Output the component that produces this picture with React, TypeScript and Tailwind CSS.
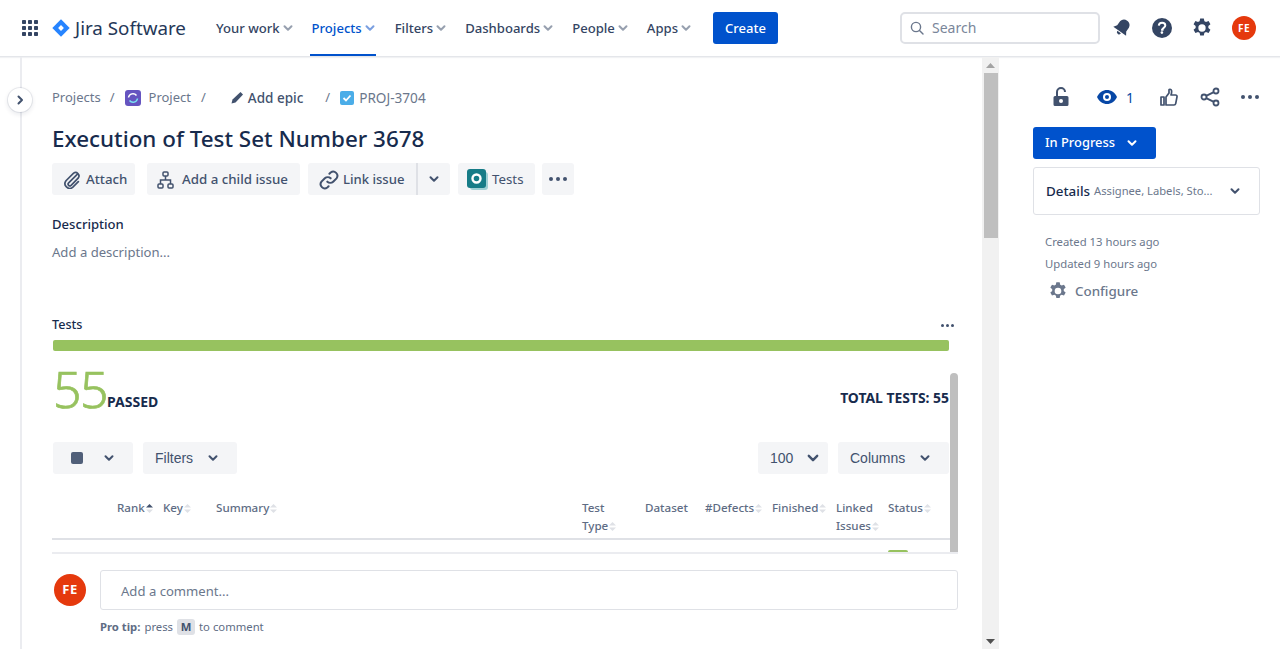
import React from "react";

const Chev = ({ c = "#42526e", w = 10, sw = 2 }: { c?: string; w?: number; sw?: number }) => (
  <svg width={w} height={w} viewBox="0 0 10 10" fill="none" className="shrink-0">
    <path d="M1.5 3.2 5 6.8 8.5 3.2" stroke={c} strokeWidth={sw} strokeLinecap="round" strokeLinejoin="round" />
  </svg>
);

const Sort = ({ up = false }: { up?: boolean }) => (
  <svg width="7" height="9" viewBox="0 0 7 9" className="ml-[1px] inline-block shrink-0">
    <path d="M3.5 0 7 3.6H0Z" fill={up ? "#42526e" : "#dfe1e6"} />
    <path d="M3.5 9 7 5.4H0Z" fill="#dfe1e6" />
  </svg>
);

const Gear = ({ size = 20, c = "#344563" }: { size?: number; c?: string }) => (
  <svg width={size} height={size} viewBox="0 0 24 24" fill="none">
    <path
      fillRule="evenodd"
      clipRule="evenodd"
      fill={c}
      d="M10 1.5h4l.6 3c.6.2 1.2.5 1.7.9l2.900-1 2 3.500-2.300 2c.1.600.1 1.300 0 2l2.300 2-2 3.500-2.900-1c-.5.400-1.100.700-1.700.900l-.600 3h-4l-.600-3c-.600-.200-1.200-.500-1.700-.900l-2.900 1-2-3.500 2.300-2c-.100-.700-.100-1.400 0-2l-2.300-2 2-3.500 2.900 1c.5-.400 1.100-.700 1.700-.900ZM12 8a4 4 0 1 0 0 8 4 4 0 0 0 0-8Z"
    />
  </svg>
);

const NavItem = ({ label, active = false, ml }: { label: string; active?: boolean; ml: string }) => (
  <div className={`flex h-full items-center relative ${ml}`}>
    <span className={`pt-[1px] text-[13.1px] font-medium ${active ? "text-[#0052cc]" : "text-[#344563]"}`}>{label}</span>
    <span className="ml-[3px]">
      <Chev c={active ? "#7a9fe0" : "#97a0af"} />
    </span>
    {active && <div className="absolute -left-[2px] right-[-1px] bottom-0 h-[2px] bg-[#0052cc]" />}
  </div>
);

const Btn = ({ children, cls = "" }: { children: React.ReactNode; cls?: string }) => (
  <div className={`flex h-[32px] items-center rounded-[3px] bg-[#f4f5f7] text-[13.3px] font-medium text-[#42526e] ${cls}`}>
    {children}
  </div>
);

const Dots = ({ c = "#42526e", r = 2, gap = 7 }: { c?: string; r?: number; gap?: number }) => (
  <svg width={gap * 2 + r * 2} height={r * 2} viewBox={`0 0 ${gap * 2 + r * 2} ${r * 2}`}>
    <circle cx={r} cy={r} r={r} fill={c} />
    <circle cx={r + gap} cy={r} r={r} fill={c} />
    <circle cx={r + gap * 2} cy={r} r={r} fill={c} />
  </svg>
);

const Head = ({ children, w }: { children: React.ReactNode; w: string }) => (
  <div className={`shrink-0 text-[11.6px] leading-[18px] font-medium text-[#5e6c84] ${w}`}>{children}</div>
);

export default function App() {
  return (
    <div className="flex h-[649px] w-[1280px] flex-col overflow-hidden bg-white font-['Noto_Sans','Open_Sans',sans-serif] text-[#172b4d]">
      {/* Top bar */}
      <header className="flex h-[57px] shrink-0 items-center border-b border-[#e4e6ea] pl-[22px] shadow-[0_1px_1px_rgba(9,30,66,0.06)]">
        <svg width="16" height="16" viewBox="0 0 16 16" fill="#344563">
          {[0, 6, 12].map((y) =>
            [0, 6, 12].map((x) => <rect key={`${x}-${y}`} x={x} y={y} width="4" height="4" rx="0.8" />)
          )}
        </svg>
        <svg width="18" height="18" viewBox="0 0 18 18" className="ml-[14px]">
          <path d="M9 0.3 17.7 9 9 17.7 0.3 9Z" fill="#2684ff" />
          <path d="M9 6.1 11.9 9 9 11.9 6.1 9Z" fill="#fff" />
        </svg>
        <span className="ml-[5px] w-[111px] whitespace-nowrap text-[18.800px] leading-none text-[#253858]">Jira Software</span>
        <div className="flex h-full items-center">
          <NavItem label="Your work" ml="ml-[30px]" />
          <NavItem label="Projects" active ml="ml-[19px]" />
          <NavItem label="Filters" ml="ml-[20px]" />
          <NavItem label="Dashboards" ml="ml-[19px]" />
          <NavItem label="People" ml="ml-[19px]" />
          <NavItem label="Apps" ml="ml-[19px]" />
        </div>
        <div className="ml-[22px] flex h-[32px] w-[65px] items-center justify-center rounded-[3px] bg-[#0052cc] pt-[1px] text-[13px] font-medium text-white">
          Create
        </div>
        <div className="ml-[122px] flex h-[32px] w-[200px] items-center rounded-[5px] border-2 border-[#dfe1e6] pb-[1px] pl-[8px] text-[14px] text-[#7a869a]">
          <svg width="14" height="14" viewBox="0 0 14 14" fill="none" stroke="#6b778c" strokeWidth="1.4">
            <circle cx="6" cy="6" r="4.6" />
            <path d="M9.5 9.5 13 13" strokeLinecap="round" />
          </svg>
          <span className="ml-[8px]">Search</span>
        </div>
        <svg width="20" height="20" viewBox="0 0 20 20" className="ml-[12px]" fill="#344563">
          <g transform="rotate(35 10 10)">
            <path d="M10 1c3.600 0 5.500 2.600 5.500 5.800v3.700l2.300 3.500H2.200l2.300-3.500V6.800C4.500 3.600 6.400 1 10 1Z" />
            <path d="M7.800 15h4.400a2.200 2.200 0 0 1-4.400 0Z" />
          </g>
        </svg>
        <svg width="22" height="22" viewBox="0 0 22 22" className="ml-[19px]">
          <circle cx="11" cy="11" r="10" fill="#344563" />
          <path d="M7.800 8.600c.1-1.800 1.500-2.900 3.300-2.900 1.900 0 3.200 1.100 3.200 2.700 0 2.300-2.800 2.200-2.800 4.400h-1.400" fill="none" stroke="#fff" strokeWidth="2" />
          <circle cx="10.900" cy="15.600" r="1.300" fill="#fff" />
        </svg>
        <span className="ml-[18px] flex">
          <Gear size={22} />
        </span>
        <div className="ml-[19px] flex h-[24px] w-[24px] items-center justify-center rounded-full bg-[#e5390d] text-[10px] font-bold tracking-[0.5px] text-white">
          FE
        </div>
      </header>

      {/* Body */}
      <div className="flex min-h-0 flex-1">
        {/* collapsed sidebar */}
        <div className="relative w-[22px] shrink-0 border-r-2 border-[#ebecf0]">
          <div className="absolute left-[8px] top-[31px] flex h-[24px] w-[24px] items-center justify-center rounded-full bg-white shadow-[0_0_0_1px_rgba(9,30,66,0.08),0_2px_4px_1px_rgba(9,30,66,0.08)]">
            <svg width="10" height="10" viewBox="0 0 10 10" fill="none">
              <path d="M3.500 1.500 7 5 3.500 8.500" stroke="#42526e" strokeWidth="2" strokeLinecap="round" strokeLinejoin="round" />
            </svg>
          </div>
        </div>

        {/* Main column */}
        <div className="flex min-w-0 flex-1 flex-col pl-[30px]">
          <div className="mt-[25px] flex h-[32px] shrink-0 items-center text-[13px] text-[#6b778c]">
            <span>Projects</span>
            <span className="ml-[9px]">/</span>
            <svg width="16" height="16" viewBox="0 0 16 16" className="ml-[10px]">
              <rect width="16" height="16" rx="3" fill="#6554c0" />
              <path d="M3.500 7.500a4.500 4.500 0 0 1 8-2" fill="none" stroke="#fff" strokeWidth="1.500" />
              <path d="M12.500 8.500a4.500 4.500 0 0 1-8 2" fill="none" stroke="#79e2f2" strokeWidth="1.500" />
            </svg>
            <span className="ml-[8px]">Project</span>
            <span className="ml-[10px]">/</span>
            <svg width="14" height="14" viewBox="0 0 14 14" className="ml-[24px]" fill="#42526e">
              <path d="M10.500 1 13 3.500 5.500 11.500 1.500 12.500 2.500 8.500Z" />
            </svg>
            <span className="ml-[4px] text-[13.500px] font-medium text-[#42526e]">Add epic</span>
            <span className="ml-[22px]">/</span>
            <svg width="16" height="16" viewBox="0 0 16 16" className="ml-[9px]">
              <rect x="1" y="1" width="14" height="14" rx="2" fill="#4bade8" />
              <path d="M4.500 8 7 10.500 11.500 5.500" fill="none" stroke="#fff" strokeWidth="1.800" />
            </svg>
            <span className="ml-[4px] text-[13.600px]">PROJ-3704</span>
          </div>

          <h1 className="mt-[7px] text-[22.400px] leading-[36px] font-medium text-[#172b4d]">Execution of Test Set Number 3678</h1>

          <div className="mt-[6px] flex shrink-0 items-center">
            <Btn cls="w-[83px] pl-[10px] gap-[5px] pt-[1px]">
              <svg width="19" height="19" viewBox="0 0 20 20" fill="none" stroke="#42526e" strokeWidth="1.800" strokeLinecap="round" className="shrink-0">
                <path d="M16 4.500 7 13.500a1.800 1.800 0 0 0 2.600 2.600l7.600-7.800a3.600 3.600 0 0 0-5-5l-8 8a5 5 0 0 0 7 7l6-6" />
              </svg>
              Attach
            </Btn>
            <Btn cls="ml-[12px] w-[153px] pl-[10px] gap-[8px] pt-[1px]">
              <svg width="17" height="18" viewBox="0 0 17 18" fill="none" stroke="#42526e" strokeWidth="1.500" className="shrink-0">
                <rect x="6" y="1" width="5" height="4" rx="1" />
                <rect x="1" y="13" width="5" height="4" rx="1" />
                <rect x="11" y="13" width="5" height="4" rx="1" />
                <path d="M8.500 5v4M3.500 13V9h10v4" />
              </svg>
              Add a child issue
            </Btn>
            <Btn cls="ml-[8px] w-[108px] pl-[11px] gap-[4px] pt-[1px] rounded-r-none">
              <svg width="20" height="20" viewBox="0 0 24 24" fill="none" stroke="#42526e" strokeWidth="2.400" strokeLinecap="round" className="shrink-0">
                <path d="M10 14a5 5 0 0 0 7 0l4-4a5 5 0 0 0-7-7l-1.500 1.500" />
                <path d="M14 10a5 5 0 0 0-7 0l-4 4a5 5 0 0 0 7 7l1.500-1.500" />
              </svg>
              <span className="text-[13.100px]">Link issue</span>
            </Btn>
            <div className="flex h-[32px] w-[34px] items-center justify-center rounded-r-[3px] border-l-2 border-[#dfe1e6] bg-[#f4f5f7]">
              <Chev />
            </div>
            <Btn cls="ml-[8px] w-[77px] pl-[9px] gap-[4px] font-normal">
              <svg width="21" height="21" viewBox="0 0 21 21" className="shrink-0">
                <rect x="3" y="3" width="18" height="18" rx="3" fill="#9fd0d4" />
                <rect width="19" height="19" rx="3" fill="#167c87" />
                <circle cx="9.500" cy="9.500" r="4" fill="none" stroke="#fff" strokeWidth="2.400" />
              </svg>
              <span className="pt-[1px]">Tests</span>
            </Btn>
            <Btn cls="ml-[7px] w-[32px] justify-center">
              <Dots r={2} gap={7} />
            </Btn>
          </div>

          <div className="mt-[18px] text-[13.100px] leading-[22px] font-medium text-[#172b4d]">Description</div>
          <div className="mt-[6px] text-[13.100px] leading-[22px] text-[#6b778c]">Add a description...</div>

          <div className="mt-[51px] flex h-[22px] w-[902px] items-center justify-between">
            <span className="text-[12.600px] font-medium text-[#172b4d]">Tests</span>
            <span className="flex">
              <Dots r={1.500} gap={5} c="#42526e" />
            </span>
          </div>

          <div className="ml-[1px] mt-[4px] h-[11px] w-[896px] shrink-0 rounded-[2px] bg-[#97c25f]" />

          {/* Scroll pane */}
          <div className="flex min-h-0 flex-1 items-stretch overflow-hidden">
            <div className="flex w-[898px] shrink-0 flex-col">
              <div className="flex h-[91px] shrink-0 items-start justify-between pr-[1px]">
                <div className="flex items-end">
                  <span className="ml-[1px] mt-[7px] text-[50px] leading-[62px] font-light tracking-[-1.5px] text-[#97c25f] [-webkit-text-stroke:0.7px_#97c25f]">55</span>
                  <span className="mb-[8px] text-[14px] font-bold text-[#172b4d]">PASSED</span>
                </div>
                <span className="mt-[37px] text-[13.900px] leading-[20px] font-bold text-[#172b4d]">TOTAL TESTS: 55</span>
              </div>

              <div className="flex shrink-0 items-center pr-[1px] font-['Liberation_Sans',sans-serif] text-[14px] font-normal">
                <div className="ml-[1px] flex h-[32px] w-[80px] items-center rounded-[3px] bg-[#f4f5f7] pl-[18px]">
                  <span className="h-[12px] w-[12px] rounded-[2px] bg-[#505f79]" />
                  <span className="ml-[21px] flex">
                    <Chev />
                  </span>
                </div>
                <div className="ml-[10px] flex h-[32px] w-[94px] items-center rounded-[3px] bg-[#f4f5f7] pl-[12px] text-[#42526e]">
                  Filters
                  <span className="ml-[15px] flex">
                    <Chev />
                  </span>
                </div>
                <div className="ml-auto flex h-[32px] w-[70px] items-center rounded-[3px] bg-[#f4f5f7] pl-[12px] text-[#42526e]">
                  <span className="pt-[1px]">100</span>
                  <span className="ml-[14px] flex">
                    <Chev w={12} />
                  </span>
                </div>
                <div className="ml-[10px] flex h-[32px] w-[111px] items-center rounded-[3px] bg-[#f4f5f7] pl-[12px] text-[#42526e]">
                  <span className="pt-[1px]">Columns</span>
                  <span className="ml-[15px] flex">
                    <Chev />
                  </span>
                </div>
              </div>

              <div className="mt-[25px] flex h-[41px] shrink-0 items-start border-b-2 border-[#dfe1e6] pl-[65px]">
                <Head w="w-[46px]">
                  Rank<Sort up />
                </Head>
                <Head w="w-[53px]">
                  Key<Sort />
                </Head>
                <Head w="w-[366px]">
                  Summary<Sort />
                </Head>
                <Head w="w-[63px]">
                  Test
                  <br />
                  Type<Sort />
                </Head>
                <Head w="w-[60px]">Dataset</Head>
                <Head w="w-[67px]">
                  #Defects<Sort />
                </Head>
                <Head w="w-[64px]">
                  Finished<Sort />
                </Head>
                <Head w="w-[52px]">
                  Linked
                  <br />
                  Issues<Sort />
                </Head>
                <Head w="w-[60px]">
                  Status<Sort />
                </Head>
              </div>
              <div className="flex h-[12px] shrink-0 items-end pl-[836px]">
                <span className="h-[2px] w-[20px] rounded-t-[2px] bg-[#97c25f]" />
              </div>
            </div>
            <div className="w-[8px] shrink-0 pt-[22px]">
              <div className="h-full rounded-t-[4px] bg-[#bfbfbf]" />
            </div>
          </div>

          {/* Comment */}
          <div className="h-[97px] w-[906px] shrink-0 border-t-2 border-[#ebecf0]">
            <div className="mt-[16px] flex items-start">
              <div className="ml-[2px] mt-[4px] flex h-[32px] w-[32px] shrink-0 items-center justify-center rounded-full bg-[#e5390d] text-[13px] font-bold tracking-[0.5px] text-white">
                FE
              </div>
              <div className="ml-[14px] flex-1">
                <div className="flex h-[40px] items-center rounded-[3px] border border-[#dfe1e6] pl-[20px] pt-[3px] text-[13.100px] text-[#6b778c]">
                  Add a comment...
                </div>
                <div className="mt-[8px] flex items-center text-[11.300px] leading-[18px] text-[#5e6c84]">
                  <span className="font-bold">Pro tip:</span>
                  <span className="ml-[4px]">press</span>
                  <span className="ml-[4px] flex h-[16px] w-[18px] items-center justify-center rounded-[3px] bg-[#dfe1e6] font-bold text-[#42526e]">
                    M
                  </span>
                  <span className="ml-[4px]">to comment</span>
                </div>
              </div>
            </div>
          </div>
        </div>

        {/* page scrollbar */}
        <div className="flex w-[17px] shrink-0 flex-col items-center bg-[#f1f1f1] pb-[5px] pt-[6px]">
          <svg width="9" height="5" viewBox="0 0 9 5" className="shrink-0">
            <path d="M4.500 0 9 5H0Z" fill="#a3a3a3" />
          </svg>
          <div className="mt-[5px] h-[165px] w-[14px] shrink-0 bg-[#bfbfbf]" />
          <svg width="9" height="5" viewBox="0 0 9 5" className="mt-auto shrink-0">
            <path d="M4.500 5 9 0H0Z" fill="#505050" />
          </svg>
        </div>

        {/* Right panel */}
        <div className="flex w-[281px] shrink-0 flex-col pl-[34px] pr-[20px]">
          <div className="mt-[28px] flex h-[24px] items-center">
            <svg width="16" height="20" viewBox="0 0 16 20" className="ml-[20px]" fill="#42526e">
              <path d="M2 9h12a1.500 1.500 0 0 1 1.500 1.500v7A1.500 1.500 0 0 1 14 19H2a1.500 1.500 0 0 1-1.500-1.500v-7A1.500 1.500 0 0 1 2 9Z" />
              <path d="M4 9V5a4 4 0 0 1 8 0" fill="none" stroke="#42526e" strokeWidth="2" />
              <circle cx="8" cy="14" r="2" fill="#fff" />
            </svg>
            <svg width="20" height="14" viewBox="0 0 20 14" className="ml-[28px]">
              <path d="M0 7C2 2.500 6 0 10 0s8 2.500 10 7c-2 4.500-6 7-10 7S2 11.500 0 7Z" fill="#0747a6" />
              <circle cx="10" cy="7" r="4" fill="#fff" />
              <circle cx="10" cy="7" r="2" fill="#0747a6" />
            </svg>
            <span className="ml-[9px] text-[14px] text-[#0747a6]">1</span>
            <svg width="18" height="18" viewBox="0 0 18 18" className="ml-[26px]" fill="none" stroke="#42526e" strokeWidth="1.700" strokeLinejoin="round">
              <path d="M1 9h3v8H1ZM6 9l3-4V2c0-1 2-1.200 2.500.5.300 1.300 0 3-.5 4.500h4.500c1 0 1.700.8 1.500 1.800l-1.300 6.800c-.2.900-.8 1.400-1.700 1.400H6Z" />
            </svg>
            <svg width="20" height="20" viewBox="0 0 20 20" className="ml-[22px]" fill="none" stroke="#42526e" strokeWidth="1.800">
              <circle cx="16" cy="4" r="2.500" />
              <circle cx="16" cy="16" r="2.500" />
              <circle cx="4" cy="10" r="2.500" />
              <path d="M6.200 8.900 13.800 5.100M6.200 11.100 13.800 14.900" />
            </svg>
            <span className="ml-[21px] flex">
              <Dots r={2} gap={7} />
            </span>
          </div>

          <div className="mt-[18px] flex h-[32px] w-[123px] items-center rounded-[3px] bg-[#0052cc] pl-[12px] text-[12.900px] font-medium text-white">
            In Progress
            <span className="ml-[12px] flex">
              <Chev c="#fff" />
            </span>
          </div>

          <div className="mt-[8px] flex h-[48px] w-[227px] items-center rounded-[3px] border border-[#dfe1e6] pl-[12px]">
            <span className="text-[13.400px] font-medium text-[#172b4d]">Details</span>
            <span className="ml-[4px] text-[11.200px] text-[#6b778c]">Assignee, Labels, Sto...</span>
            <span className="ml-auto mr-[19px] flex">
              <Chev />
            </span>
          </div>

          <div className="ml-[12px] mt-[16px] text-[11.300px] leading-[22px] text-[#6b778c]">
            <div>Created 13 hours ago</div>
            <div>Updated 9 hours ago</div>
          </div>
          <div className="ml-[15px] mt-[6px] flex items-center text-[13.400px] font-medium leading-[20px] text-[#6b778c]">
            <Gear size={20} c="#6b778c" />
            <span className="ml-[7px]">Configure</span>
          </div>
        </div>
      </div>
    </div>
  );
}
